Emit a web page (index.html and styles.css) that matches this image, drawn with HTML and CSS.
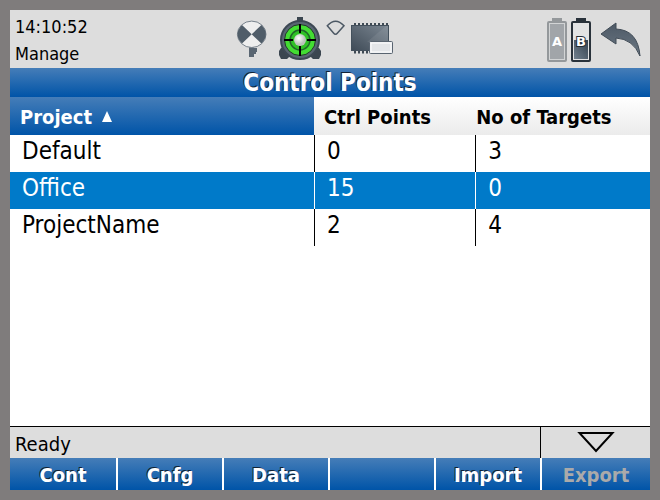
FILE: index.html
```
<!DOCTYPE html>
<html lang="en">
<head>
  <meta charset="UTF-8" />
  <meta name="viewport" content="width=device-width, initial-scale=1.0" />
  <title>Control Points</title>
  <link rel="stylesheet" href="styles.css">
</head>
<body>

  <header class="top-bar">
    <div class="top-info">
      <div>14:10:52</div>
      <div>Manage</div>
    </div>

    <div class="device-icons">
      <!-- prism -->
      <svg class="icon-prism" width="32" height="48" viewBox="0 0 32 48">
        <path d="M13 30h5v3h3v4h-1v2h-2v3h-5z" fill="#5a6672"/>
        <ellipse cx="15.700" cy="19.300" rx="14.300" ry="13.200" fill="#eee" stroke="#77818b"/>
        <path d="M15.700 19.300L6 10Q-3 19.300 6 28.600ZM15.700 19.300L25.400 10Q34.400 19.300 25.400 28.600Z" fill="#505d69"/>
      </svg>
      <!-- target lock -->
      <svg class="icon-target" width="44" height="48" viewBox="0 0 44 48">
        <defs>
          <radialGradient id="ball" cx="40%" cy="35%">
            <stop offset="0" stop-color="#fff"/>
            <stop offset="1" stop-color="#bbc2bb"/>
          </radialGradient>
        </defs>
        <path d="M19 2h6v4h-6zM1 40v-4l2-3h6l3 8-3 3H3zM43 40v-4l-2-3h-6l-3 8 3 3h6z" fill="#3b4650"/>
        <circle cx="22" cy="25" r="19" fill="#596673" stroke="#3d4854" stroke-width="2"/>
        <circle cx="22" cy="25" r="15.500" fill="#43dd33" stroke="#23352c"/>
        <circle cx="22" cy="25" r="10" fill="#2fc126" stroke="#21642a" stroke-width="1.500"/>
        <path d="M22 9v9M22 31v10M6 25h9M29 25h9" stroke="#000" stroke-width="2"/>
        <circle cx="22" cy="25" r="6" fill="url(#ball)"/>
      </svg>
      <!-- search window -->
      <svg class="icon-signal" width="20" height="48" viewBox="0 0 20 48">
        <path d="M1.300 10.800Q9.500 1.500 18 10.800L11.500 18Q9.500 20.500 7.500 18Z" fill="none" stroke="#4c5864" stroke-width="1.500"/>
      </svg>
      <!-- memory card -->
      <svg class="icon-memory" width="44" height="48" viewBox="0 0 44 48">
        <defs>
          <linearGradient id="chip" x1="0" y1="1" x2="1" y2="0">
            <stop offset="0" stop-color="#3f4b57"/>
            <stop offset="1" stop-color="#7c8792"/>
          </linearGradient>
        </defs>
        <path d="M4 9.500h35M4 37h16" stroke="#3f4a54" stroke-width="3" stroke-dasharray="2 2"/>
        <rect x="1.500" y="10.500" width="37" height="25" fill="url(#chip)" stroke="#43505c"/>
        <path d="M17 27L36 11h2v16z" fill="#fff" opacity=".08"/>
        <rect x="19.500" y="26.500" width="23" height="12" rx="1" fill="#e3e5e8" stroke="#596470"/>
        <rect x="21" y="28" width="20" height="9" fill="none" stroke="#fff"/>
      </svg>
    </div>

    <div class="power-icons">
      <svg width="20" height="48" viewBox="0 0 20 48">
        <path d="M5 3h10v4H5z" fill="#94989b"/>
        <rect x="1" y="7" width="18" height="39" rx="1" fill="#d2d4d5" stroke="#94989b" stroke-width="2"/>
        <rect x="3" y="9" width="14" height="35" fill="#a1a5a9"/>
        <text class="battery-letter" x="10" y="31">A</text>
      </svg>
      <svg width="20" height="48" viewBox="0 0 20 48">
        <defs>
          <linearGradient id="charge" x1="1" y1="0" x2="0" y2="1">
            <stop offset="0" stop-color="#34414e"/>
            <stop offset="1" stop-color="#71808e"/>
          </linearGradient>
        </defs>
        <path d="M5 3h10v4H5z" fill="#29323b"/>
        <rect x="1" y="7" width="18" height="39" rx="1" fill="#e2e3e4" stroke="#29323b" stroke-width="2"/>
        <rect x="3" y="25" width="14" height="19" fill="url(#charge)"/>
        <text class="battery-letter outlined" x="10" y="31">B</text>
      </svg>
      <button class="back-button" aria-label="Back">
        <svg width="42" height="48" viewBox="0 0 42 48">
          <defs>
            <linearGradient id="back" x1="0" y1="0" x2="0" y2="1">
              <stop offset="0" stop-color="#4d5966"/>
              <stop offset="1" stop-color="#6b7783"/>
            </linearGradient>
          </defs>
          <path d="M1 19L16 8v6Q38 15 40 41Q33 24 16 23v6Z" fill="url(#back)" stroke="#414c57"/>
        </svg>
      </button>
    </div>
  </header>

  <h1 class="title-bar">Control Points</h1>

  <main class="content">
    <table class="point-table">
      <colgroup>
        <col class="col-project">
        <col class="col-points">
        <col>
      </colgroup>
      <thead>
        <tr>
          <th class="sorted" aria-sort="ascending">
            <span class="sort-label">Project
              <svg width="12" height="12" viewBox="0 0 12 12"><path d="M6 0l5 11H1z" fill="#fff"/></svg>
            </span>
          </th>
          <th>Ctrl Points</th>
          <th class="targets-head">No of Targets</th>
        </tr>
      </thead>
      <tbody>
        <tr><td>Default</td><td>0</td><td>3</td></tr>
        <tr class="selected"><td>Office</td><td>15</td><td>0</td></tr>
        <tr><td>ProjectName</td><td>2</td><td>4</td></tr>
      </tbody>
    </table>
  </main>

  <div class="status-bar">
    <div class="status-text">Ready</div>
    <button class="expand-button" aria-label="More">
      <svg width="38" height="22" viewBox="0 0 38 22"><path d="M2.500 2h33L19 20z" fill="none" stroke="#000" stroke-width="2"/></svg>
    </button>
  </div>

  <footer class="soft-keys">
    <button>Cont</button>
    <button>Cnfg</button>
    <button>Data</button>
    <button aria-label="Unassigned"></button>
    <button>Import</button>
    <button disabled>Export</button>
  </footer>

</body>
</html>
```
FILE: styles.css
```
* {
  box-sizing: border-box;
}
body {
  margin: 0;
  min-height: 100vh;
  border: 10px solid #7f7c7c;
  display: flex;
  flex-direction: column;
  background: #fff;
  color: #000;
  font-family: "DejaVu Sans Condensed", "Noto Sans", sans-serif;
  font-size: 18px;
}
button {
  margin: 0;
  padding: 0;
  border: 0;
  background: none;
  font: inherit;
  cursor: pointer;
}
svg {
  display: block;
}

/* top bar */
.top-bar {
  display: flex;
  align-items: center;
  height: 58px;
  padding: 0 8px 0 5px;
  background: #ddd;
}
.top-info {
  width: 35%;
  padding-top: 1px;
  line-height: 27px;
}
.device-icons {
  display: flex;
  margin-left: 2px;
}
.icon-target {
  margin-left: 10px;
}
.icon-signal {
  margin: 0 4px;
}
.power-icons {
  display: flex;
  gap: 4px;
  margin-left: auto;
}
.back-button {
  margin-left: 5px;
}
.battery-letter {
  font-family: "DejaVu Sans", sans-serif;
  font-size: 13px;
  font-weight: bold;
  text-anchor: middle;
  fill: #fff;
}
.battery-letter.outlined {
  stroke: #222b34;
  stroke-width: 2px;
  paint-order: stroke;
}

.title-bar {
  margin: 0;
  padding-top: 2px;
  background: linear-gradient(#457db8, #0054a8);
  color: #fff;
  font-size: 24px;
  line-height: 27px;
  text-align: center;
  text-shadow: -1px -1px #123;
}

/* table */
.content {
  flex: 1;
}
.point-table {
  width: 100%;
  table-layout: fixed;
  border-collapse: separate;
  border-spacing: 0;
  text-align: left;
}
.col-project {
  width: 47.5%;
}
.col-points {
  width: 25.2%;
}
th {
  height: 38px;
  padding: 2px 0 0 10px;
  background: linear-gradient(#fff, #ebebeb);
  font-size: 20px;
}
th.sorted {
  background: linear-gradient(#457db8, #0054a8);
  color: #fff;
}
th.targets-head {
  padding-left: 1px;
}
.sort-label {
  display: flex;
  align-items: center;
  gap: 9px;
}
td {
  height: 37px;
  padding: 0 12px 4px;
  font-size: 24px;
  line-height: 33px;
}
td + td {
  border-left: 1px solid #000;
}
.selected td {
  background: #007ac9;
  color: #fff;
  border-color: #fff;
}

/* bottom */
.status-bar,
.soft-keys {
  display: grid;
}
.status-bar {
  grid-template-columns: 265fr 55fr;
  height: 32px;
  border-top: 1px solid #000;
  background: #ddd;
}
.status-text {
  padding-left: 5px;
  font-size: 20px;
  line-height: 34px;
}
.expand-button {
  display: flex;
  justify-content: center;
  padding-top: 4px;
  border-left: 1px solid #000;
}
.soft-keys {
  grid-template-columns: repeat(5, 53fr) 55fr;
}
.soft-keys button {
  height: 32px;
  padding-top: 2px;
  background: linear-gradient(#457db8, #0054a8);
  color: #fff;
  font-size: 20px;
  font-weight: bold;
  text-shadow: -1px -1px #123;
}
.soft-keys button + button {
  border-left: 2px solid #fff;
}
.soft-keys button:disabled {
  color: #aaa;
  text-shadow: none;
  cursor: default;
}
```
